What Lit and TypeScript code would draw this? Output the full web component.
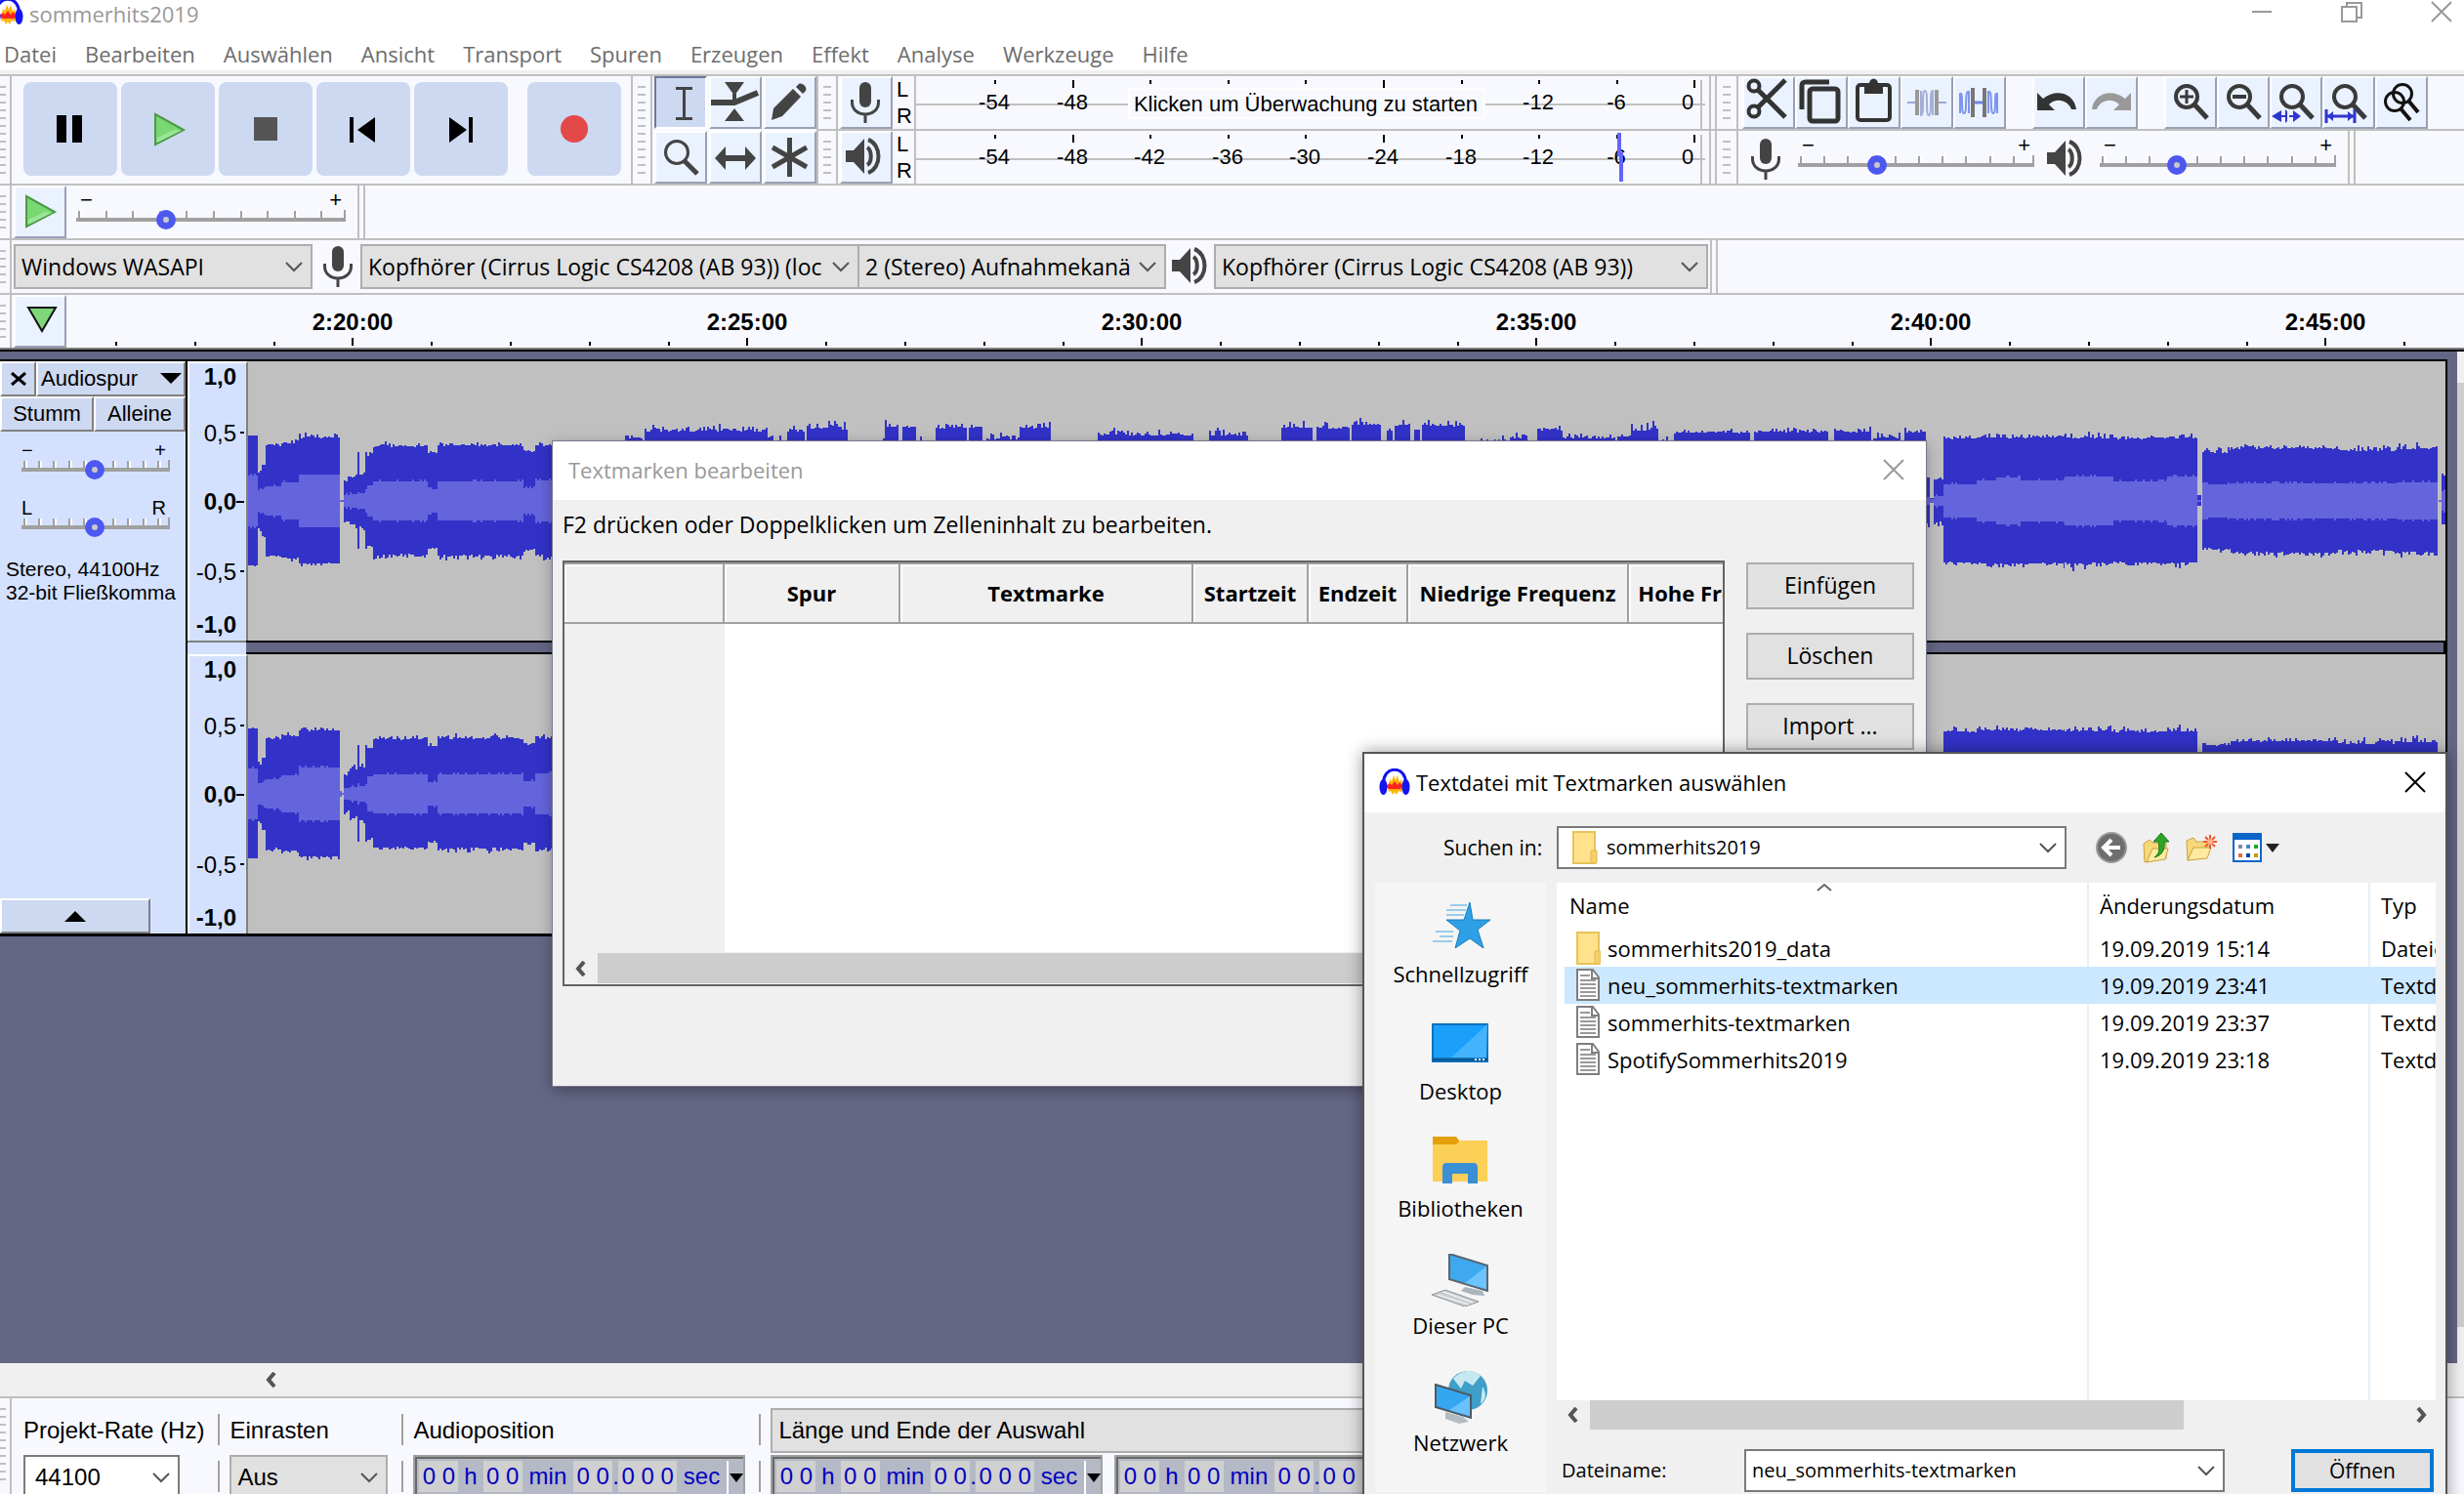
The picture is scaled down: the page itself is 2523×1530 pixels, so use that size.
import { LitElement, html, svg, css, nothing } from "lit";
import { customElement } from "lit/decorators.js";

/* ---------- icons ---------- */

const pic = (w: number, h: number, body: unknown) =>
  html`<svg class="pic" width=${w} height=${h} viewBox="0 0 ${w} ${h}" aria-hidden="true">${body}</svg>`;

const DARK = "#444444";

const mic = svg`<rect x="20" y="6" width="12" height="26" rx="6" fill=${DARK}/>
  <path d="M12.500 24v3c0 7 6 12 13.500 12s13.500-5 13.500-12v-3M26 39v9" fill="none" stroke=${DARK} stroke-width="3"/>`;
const speaker = svg`<path d="M6 20h8L25 8v36L14 32H6z" fill=${DARK}/>
  <path d="M28 17c5 3 5 15 0 18" fill="none" stroke=${DARK} stroke-width="4"/>
  <path d="M29 9c14 5 14 29 0 34" fill="none" stroke=${DARK} stroke-width="4"/>`;
const lens = (inner: unknown = nothing) => svg`<circle cx="23" cy="21" r="11" fill="none" stroke="#3a3a3a" stroke-width="4"/>
  <path d="M31 29L44 43" stroke="#3a3a3a" stroke-width="5"/>${inner}`;
const playGreen = svg`<path d="M1 1L30 17L1 32z" fill="#78d872" stroke="#4c9a49" stroke-width="2"/><path d="M3 30L28 17.500L20 17L3 25z" fill="#9be596"/>`;

const ICON = {
  pause: svg`<path d="M34 34h10v28H34zM50 34h10v28H50z" fill="#000"/>`,
  play: svg`<g transform="translate(34 32)">${playGreen}</g>`,
  stop: svg`<rect x="36" y="36" width="24" height="24" fill="#555"/>`,
  start: svg`<path d="M34 36h4v26h-4zM60 36v26L42 49z" fill="#000"/>`,
  end: svg`<path d="M56 36h4v26h-4zM36 36v26l18-13z" fill="#000"/>`,
  record: svg`<circle cx="48" cy="48" r="14" fill="#e34949"/>`,
  ibeam: svg`<path d="M22 12.500h17M22 43.500h17M30.500 12v32" stroke=${DARK} stroke-width="3"/>`,
  envelope: svg`<path d="M16 6h20L26 20zM16 46h20L26 33z" fill=${DARK}/><path d="M2 27h24L50 17" fill="none" stroke=${DARK} stroke-width="6"/><path d="M26 18v10" stroke=${DARK} stroke-width="4"/>`,
  pencil: svg`<path d="M8 45l2-12L30 13l8 8L19 41z" fill=${DARK}/><path d="M33 11l3-3c3-2 9 3 7 7l-3 3z" fill=${DARK}/>`,
  zoom: svg`<circle cx="23" cy="22" r="11.500" fill="none" stroke=${DARK} stroke-width="3"/><path d="M31 31L44 44" stroke=${DARK} stroke-width="5"/>`,
  shift: svg`<path d="M6 28l11-12v9h20v-9l11 12-11 12v-9H17v9z" fill=${DARK}/>`,
  multi: svg`<path d="M26.500 7v40M9 17l35 20M44 17L9 37" stroke=${DARK} stroke-width="5"/>`,
  mic,
  speaker,
  cut: svg`<g fill="none" stroke="#333" stroke-width="4"><circle cx="12" cy="10" r="5.500"/><circle cx="12" cy="36" r="5.500"/><path d="M16 14L44 42M16 32L44 4" stroke-width="5"/></g>`,
  copy: svg`<path d="M35 6H11c-3 0-4 1-4 4v24" fill="none" stroke="#333" stroke-width="5"/><rect x="15" y="13" width="29" height="33" rx="3" fill="none" stroke="#333" stroke-width="5"/>`,
  paste: svg`<rect x="10" y="9" width="33" height="36" rx="3" fill="none" stroke="#333" stroke-width="4"/><path d="M17 8h5c0-7 9-7 9 0h5v10H17z" fill="#333"/>`,
  trim: svg`<path d="M7 27h10M36 27h11" stroke="#9aa8d8" stroke-width="2"/><path d="M17 14v26M37 14v26" stroke="#999" stroke-width="4"/><path d="M21 15v25c4 0 0-25 4-25s0 25 4 25 0-25 4-25v25" fill="none" stroke="#a4b0da" stroke-width="2"/>`,
  silence: svg`<path d="M20 12v30M32 12v30" stroke="#777" stroke-width="4"/><path d="M22 27h8" stroke="#6f86e8" stroke-width="3"/><path d="M7 38V18c4-3 0 20 4 20s0-24 5-22v22M36 38V16c5-2 1 22 5 22s0-23 4-20v20" fill="none" stroke="#7e95ee" stroke-width="2"/>`,
  undo: svg`<path d="M5 17v18h18l-6-6c8-8 20-4 23 5h5C43 17 24 12 11 23z" fill="#333"/>`,
  redo: svg`<path d="M47 17v18H29l6-6c-8-8-20-4-23 5H7C9 17 28 12 41 23z" fill="#999"/>`,
  zoomIn: lens(svg`<path d="M16 21h14M23 14v14" stroke="#3a3a3a" stroke-width="3"/>`),
  zoomOut: lens(svg`<path d="M16 21h14" stroke="#3a3a3a" stroke-width="4"/>`),
  zoomSel: lens(svg`<path d="M2 41l10-6v5h4v-6l2 2v10l-2 2v-6h-4v5zM32 41l-8-6v5h-4v2h4v5z" fill="#2f35cc"/>`),
  zoomFit: lens(svg`<path d="M4 34v14M33 34v14M5 41h27" stroke="#2f35cc" stroke-width="3"/><path d="M5 41l6-5v10zM32 41l-6-5v10z" fill="#2f35cc"/>`),
  zoomToggle: svg`<g fill="none" stroke="#111"><circle cx="28" cy="18" r="9.500" stroke-width="3"/><circle cx="20" cy="26" r="9.500" stroke-width="3"/><path d="M34 25l10 12M26 33l10 12" stroke-width="4"/></g>`,
};

const logo = html`<svg class="pic" width="32" height="28" viewBox="0 0 32 28" aria-hidden="true">
  <path d="M9 20l2-9 2 2 2-6 2 5 2-5 2 7 2-3 2 9-2 4-3-1-2 4-2-3-2 3-2-4-2 1z" fill="#ffb400"/>
  <path d="M7 18l4-3 2 2 3-4 3 4 2-3 4 4-3 3H10z" fill="#f22"/>
  <path d="M5 17C2-4 30-4 27 17" fill="none" stroke="#1010ee" stroke-width="3"/>
  <ellipse cx="4.500" cy="19" rx="4" ry="8" fill="#1414f0"/><ellipse cx="27.500" cy="19" rx="4" ry="8" fill="#1414f0"/></svg>`;

const folder = svg`<path d="M1 1h22v32H1z" fill="#ffe28b" stroke="#e8c25a" stroke-width="2"/><path d="M19 20h6v13h-6z" fill="#f5d069" stroke="#e3b94d" stroke-width="1"/>`;
const sheet = svg`<path d="M1 1h16l6 8v23H1z" fill="#fff" stroke="#7f7f7f" stroke-width="2"/><path d="M16 1v9h7" fill="none" stroke="#7f7f7f" stroke-width="2"/><path d="M4 7h10M4 12h16M4 16h16M4 20h16M4 24h16M4 28h16" stroke="#999" stroke-width="2"/>`;

const chevron = html`<svg class="chev" width="20" height="12" viewBox="0 0 20 12" aria-hidden="true"><path d="M2 2l8 8 8-8" fill="none" stroke="#555" stroke-width="2"/></svg>`;
const cross = (c: string) => pic(22, 22, svg`<path d="M1 1l20 20M21 1L1 21" stroke=${c} stroke-width="2"/>`);
const arrowLeft = pic(12, 16, svg`<path d="M10 1L4 8l6 7" fill="none" stroke="#555" stroke-width="4"/>`);
const arrowRight = pic(12, 16, svg`<path d="M2 1l6 7-6 7" fill="none" stroke="#555" stroke-width="4"/>`);

/* ---------- waveform data: [start, end, peak, rms, jitter] ---------- */

type Seg = [number, number, number, number, number];
const WAVE: Seg[] = [
  [0, 10, 67, 26, 1], [10, 14, 30, 11, 3], [14, 18, 38, 12, 3], [18, 34, 58, 15, 4], [34, 52, 60, 19, 4],
  [52, 94, 66, 27, 4], [94, 98, 1, 1, 0], [98, 104, 20, 6, 5], [104, 112, 26, 7, 4], [112, 114, 50, 9, 1],
  [114, 120, 28, 8, 3], [120, 122, 50, 10, 1], [122, 128, 48, 16, 4], [128, 184, 57, 20, 4], [184, 194, 50, 12, 3],
  [194, 282, 58, 20, 4], [282, 294, 51, 13, 2], [294, 386, 58, 21, 4], [386, 404, 65, 20, 3], [406, 532, 73, 22, 5],
  [532, 546, 62, 20, 8], [552, 570, 72, 20, 5], [572, 614, 76, 22, 7], [614, 642, 50, 20, 4], [642, 652, 62, 20, 4],
  [652, 666, 77, 20, 6], [670, 684, 76, 20, 2], [686, 702, 58, 20, 8], [704, 736, 76, 22, 4], [738, 752, 76, 20, 3],
  [756, 790, 66, 20, 9], [790, 822, 77, 22, 7], [822, 868, 52, 20, 5], [870, 968, 69, 22, 6], [984, 1024, 69, 22, 6],
  [1058, 1090, 77, 22, 6], [1094, 1128, 76, 22, 6], [1130, 1160, 80, 22, 6], [1166, 1172, 72, 20, 3],
  [1174, 1190, 79, 20, 5], [1194, 1200, 74, 20, 3], [1202, 1246, 79, 22, 7], [1246, 1290, 60, 20, 7],
  [1292, 1310, 66, 20, 5], [1320, 1346, 74, 20, 6], [1346, 1400, 66, 20, 5], [1402, 1416, 67, 20, 4],
  [1416, 1444, 75, 20, 7], [1446, 1454, 62, 20, 5], [1460, 1538, 71, 22, 4], [1542, 1618, 72, 22, 4],
  [1624, 1662, 72, 22, 4], [1664, 1692, 67, 20, 8], [1696, 1718, 72, 20, 5], [1718, 1722, 26, 4, 6],
  [1722, 1726, 3, 2, 0], [1726, 1736, 24, 5, 6], [1736, 1770, 65, 17, 4], [1770, 1790, 66, 21, 4],
  [1790, 1815, 66, 24, 4], [1815, 1860, 66, 21, 4], [1860, 1910, 66, 25, 6], [1910, 1965, 65, 20, 4],
  [1965, 1996, 66, 25, 6], [1996, 2000, 6, 1, 2], [2001, 2030, 51, 17, 4], [2030, 2140, 55, 18, 4],
  [2140, 2200, 53, 18, 5], [2200, 2242, 55, 19, 5], [2243, 2246, 1, 1, 0], [2246, 2250, 26, 10, 4],
];

function wave(seed: number) {
  const mid = 143;
  let state = seed;
  const rnd = () => {
    state = (state * 1103515245 + 12345) % 2147483648;
    return state / 2147483648;
  };
  const spread = (j: number) => Math.round((rnd() * rnd() - 0.25) * j * 1.6);
  let peak = "";
  let rms = "";
  for (const [a, b, p, r, j] of WAVE) {
    for (let x = a; x < b; x += 2) {
      const up = Math.max(1, p + spread(j));
      const down = Math.max(1, p - 1 + spread(j));
      const soft = Math.max(1, r + (rnd() > 0.8 ? 2 : 0));
      const w = Math.min(2, b - x);
      peak += `M${x} ${mid - up}h${w}v${up + down}h-${w}z`;
      rms += `M${x} ${mid - soft}h${w}v${soft * 2}h-${w}z`;
    }
  }
  return html`<svg class="wave" viewBox="0 0 2250 286" preserveAspectRatio="none" shape-rendering="crispEdges" role="img" aria-label="Wellenform">
    <path d=${peak} fill="#3232c8"/><path d=${rms} fill="#6464dc"/></svg>`;
}

const WAVES = [wave(7), wave(41)];

/* ---------- shared pieces ---------- */

const combo = (id: string, label: string, value: string, cls = "") => html`
  <span class="combo ${cls}"><select id=${id} aria-label=${label}><option>${value}</option></select>${chevron}</span>`;

const slider = (label: string, value: number, cls = "", lo = "−", hi = "+") => html`
  <label class="slider ${cls}"><span class="ends"><span>${lo}</span><span>${hi}</span></span>
    <input type="range" min="0" max="100" .value=${String(value)} aria-label=${label} /></label>`;

const toolBtn = (name: keyof typeof ICON, label: string, cls = "") =>
  html`<button class="tool ${cls}" aria-label=${label}>${pic(54, 54, ICON[name])}</button>`;

const MENU = ["Datei", "Bearbeiten", "Auswählen", "Ansicht", "Transport", "Spuren", "Erzeugen", "Effekt", "Analyse", "Werkzeuge", "Hilfe"];

const scale = (monitor: boolean) => html`
  <svg class="scale" height="54" shape-rendering="crispEdges">
    <path d="M0 29H808" stroke="#c0c0c0" stroke-width="2"/>
    <path d="M804 4V54" stroke="#c0c0c0" stroke-width="2"/>
    ${[-54, -48, -42, -36, -30, -24, -18, -12, -6, 0].map((db, i) => {
      const x = Math.round(81 + i * 79.6);
      const covered = monitor && db > -48 && db < -12;
      return svg`<rect x=${x - 1} y="4" width="2" height=${db === -48 || db === -24 || db === 0 ? 8 : 4} fill="#000"/>
        ${covered ? nothing : svg`<text x=${db === 0 ? x - 7 : x - 1} y="34" text-anchor="middle">${db}</text>`}`;
    })}
    ${monitor
      ? svg`<rect x="218" y="13" width="364" height="30" fill="#f8f9ff" stroke="#fff" stroke-width="2"/>
        <text x="399" y="36" text-anchor="middle">Klicken um Überwachung zu starten</text>`
      : svg`<path d="M720 2v22h2v28" fill="none" stroke="#6464fa" stroke-width="4"/>`}
  </svg>`;

const timeField = (label: string) => {
  const d = (n: number) => html`<span class="digits">${Array.from({ length: n }, () => html`<i>0</i>`)}</span>`;
  return html`<div class="time" role="group" aria-label=${label}>
    ${d(2)}<span class="unit h">h</span>${d(2)}<span class="unit m">min</span>${d(2)}<span class="dot">.</span>${d(3)}<span class="unit s">sec</span>
    <button class="drop" aria-label="Format">${pic(16, 10, svg`<path d="M1 0h14L8 9z"/>`)}</button></div>`;
};

const PLACES: [string, unknown][] = [
  ["Schnellzugriff", svg`<path d="M39 0l3 18h18L47 28l6 19-14-10-15 10 5-18-14-11h18z" fill="#2f9fe6" stroke="#1a7cc0" stroke-width="1"/><path d="M19 3h17M15 8h20M15 13h18M4 30h18M8 35h14M1 40h20" stroke="#9accec" stroke-width="2"/>`],
  ["Desktop", svg`<rect x="1" y="5" width="56" height="38" fill="#1aa0fb" stroke="#0a72bd" stroke-width="2"/><path d="M57 5L20 39h36z" fill="#45b4ff"/><path d="M1 41h56" stroke="#075a96" stroke-width="3"/><path d="M44 41h12" stroke="#fff" stroke-width="2" stroke-dasharray="2 2"/>`],
  ["Bibliotheken", svg`<path d="M1 0h24l3 4v6H1z" fill="#e3a008"/><path d="M1 8h24l4-4h28v42H1z" fill="#fccf57"/><path d="M11 48V32c0-3 1-5 4-5h28c3 0 4 2 4 5v16H37V38H21v10z" fill="#3a8fd6"/>`],
  ["Dieser PC", svg`<path d="M18 0l39 12v26L18 26z" fill="#3fa9ef" stroke="#5b6670" stroke-width="2"/><path d="M56 13v23L34 30z" fill="#6cc4ff"/><path d="M34 34l18 4 2 5-12-1-12-4z" fill="#aab4bb"/><path d="M0 42l14-5 34 12-14 5z" fill="#c9ced2" stroke="#8f979d" stroke-width="1"/><path d="M6 42l32 10M12 39l30 11" stroke="#fff" stroke-width="1"/>`],
  ["Netzwerk", svg`<ellipse cx="37" cy="20" rx="20" ry="20" fill="#3f9fc8"/><path d="M22 8c8-10 22-10 28-3l-8 10-8-5-4 8zM52 16c5 8 3 14-2 18z" fill="#c6e8f0"/><path d="M4 14l36 11v23L4 37z" fill="#35a6f2" stroke="#4e5a64" stroke-width="2"/><path d="M39 26v20L18 40z" fill="#68c2ff"/><path d="M14 42l18 5 6 5-10 2-14-5z" fill="#b4bcc2"/>`],
];

const FILES: [string, string, string, boolean][] = [
  ["sommerhits2019_data", "19.09.2019 15:14", "Dateiordner", true],
  ["neu_sommerhits-textmarken", "19.09.2019 23:41", "Textdokument", false],
  ["sommerhits-textmarken", "19.09.2019 23:37", "Textdokument", false],
  ["SpotifySommerhits2019", "19.09.2019 23:18", "Textdokument", false],
];

@customElement("app-root")
export class AppRoot extends LitElement {
  static styles = css`
    :host {
      display: block;
      --ui: "Open Sans", "Noto Sans", sans-serif;
      --arial: "Liberation Sans", Arial, sans-serif;
      --bar: #f8f9ff;
      --line: #c0c0c0;
      --slate: #646684;
      font-family: var(--ui);
      font-size: 22px;
      line-height: 30px;
      color: #000;
    }
    *, *::before, *::after { box-sizing: border-box; }
    button, select, input { font: inherit; color: inherit; margin: 0; padding: 0; border: 0; background: none; border-radius: 0; }
    .pic { display: block; flex: none; }
    .app { position: relative; display: flex; flex-direction: column; height: 100vh; overflow: hidden; background: #fff; }

    .titlebar { display: flex; justify-content: space-between; align-items: flex-start; height: 38px; color: #999; }
    .brand { display: flex; align-items: flex-start; gap: 6px; overflow: hidden; }
    .brand .pic { margin-left: -8px; margin-top: -2px; }
    .brand h1 { font: inherit; line-height: 28px; margin: 0; }
    .wincontrols { display: flex; gap: 70px; padding: 1px 12px 0 0; }
    .menu { display: flex; gap: 29px; height: 34px; padding: 2px 4px 0; color: #6d6d6d; }
    .menu a { color: inherit; text-decoration: none; }

    .dock { border-top: 4px solid #f0f0f0; background: var(--bar); }
    .row { display: flex; border-top: 2px solid var(--line); }
    .grab { flex: none; width: 20px; padding: 10px 5px; border-right: 2px solid var(--line); background: repeating-linear-gradient(to bottom, var(--line) 0 2px, transparent 2px 8px) content-box; }
    .grab.edge { width: 12px; padding: 10px 4px 10px 0; }
    .transport { display: flex; gap: 4px; padding: 6px 10px 8px 12px; border-right: 2px solid var(--line); }
    .transport button { width: 96px; height: 96px; border-radius: 8px; background: #cdd9f1; }
    .transport .rec { margin-left: 16px; }
    .tool { width: 54px; height: 54px; overflow: hidden; background: #ebf2ff; border: 2px solid #fff; border-color: #fff #9aa0b5 #9aa0b5 #fff; }
    .tool .pic { margin: -2px; }
    .tool.down { background: #cdd9f1; border-color: #6e7896 #fff #fff #6e7896; }
    .tools { display: grid; grid-template-columns: repeat(3, 54px); gap: 2px; padding-left: 2px; border-right: 2px solid var(--line); }
    .stack { display: flex; flex-direction: column; }
    .stack > * + * { border-top: 2px solid var(--line); }
    .stack.rest { flex: 1; }
    .half { display: flex; height: 54px; box-sizing: content-box; }
    .half > * { flex: none; }
    .half > .tool { margin-left: 2px; }
    .lr { display: flex; flex-direction: column; width: 22px; padding: 0 0 0 4px; font: 22px/27px var(--arial); }
    .scale { width: 812px; margin-right: 2px; border-left: 2px solid var(--line); font: 22px var(--arial); }
    .end { width: 8px; border: 2px solid var(--line); border-width: 0 2px; }
    .rest .grab { width: 22px; padding: 10px 6px; }
    .rest .grab + .tool { margin-left: 4px; }
    .edit .tool + .tool { margin-left: 0; }
    .edit .tool.gap { margin-left: 27px; }
    .slim { height: 56px; }
    .slim > .tool { margin-left: 2px; }

    .slider { display: flex; flex-direction: column; width: 242px; padding-top: 2px; }
    .slider .ends { display: flex; justify-content: space-between; padding: 0 4px; font: 22px/26px var(--arial); }
    .slider input {
      appearance: none; width: 100%; height: 20px; margin-top: -3px;
      background:
        linear-gradient(#a0a0a0, #a0a0a0) 0 8px / 100% 4px no-repeat,
        linear-gradient(#a0a0a0, #a0a0a0) 100% 0 / 2px 8px no-repeat,
        repeating-linear-gradient(to right, #a0a0a0 0 2px, #fff 2px 4px, transparent 4px 10%) 2px 1px / 100% 7px no-repeat;
    }
    .slider input::-webkit-slider-thumb { appearance: none; width: 20px; height: 20px; border: 7px solid #4c58f0; border-radius: 50%; background: #c8c8c8; }
    .slider.speed { width: 276px; margin: 0 12px 0 10px; }

    .combo { display: inline-grid; align-items: center; min-width: 0; background: #e1e1e1; border: 2px solid #adadad; }
    .combo > * { grid-area: 1 / 1; }
    .combo select { appearance: none; width: 100%; height: 100%; padding: 0 30px 0 6px; line-height: 30px; text-overflow: clip; outline: 0; }
    .combo .chev { justify-self: end; margin-right: 7px; pointer-events: none; }
    .devices { height: 56px; font-size: 23px; }
    .devices .combo { height: 46px; margin-top: 4px; }
    .devices .host { width: 306px; margin-left: 2px; }
    .devices .input { width: 511px; }
    .devices .chans { width: 316px; margin-left: -2px; }
    .devices .output { width: 506px; margin-right: 2px; }
    .devices > .pic { margin: 0 -5px 0 0; }

    .ruler { height: 54px; box-sizing: content-box; border-bottom: 2px solid #808080; }
    .ruler > .tool { margin-left: 2px; }
    .ruler .times { flex: 1; height: 54px; font: bold 24px var(--arial); }

    .work { flex: 1; min-height: 0; display: flex; background: var(--slate); border-top: 2px solid #000; }
    .vscroll { width: 7px; margin-left: 10px; padding-top: 32px; background: #f0f0f0; }
    .vscroll div { height: 967px; background: #cdcdcd; }
    .track { flex: 1; align-self: flex-start; margin-top: 8px; display: grid; grid-template-columns: 192px 1fr; border: 2px solid #000; border-width: 2px 2px 3px 0; }
    .panel { display: flex; flex-direction: column; background: #d4e1fe; border-right: 2px solid #000; font: 22px/24px var(--arial); }
    .pair { display: grid; height: 36px; }
    .pair.head { grid-template-columns: 37px 1fr; }
    .pair.mute { grid-template-columns: 96px 1fr; }
    .face { display: flex; align-items: center; justify-content: center; background: #cdd9f1; border: 2px solid #fff; border-color: #fff #808080 #808080 #fff; }
    .face.name { justify-content: space-between; padding: 0 2px 0 3px; }
    .panel .slider { width: 152px; margin-left: 22px; padding-top: 7px; }
    .panel .slider .ends { padding: 0 4px 0 0; font-size: 20px; line-height: 25px; }
    .panel .slider + .slider { padding-top: 17px; }
    .format { margin: 21px 0 0 6px; font-size: 21px; white-space: nowrap; }
    .panel .fold { width: 154px; height: 36px; margin-top: auto; }
    .channels { display: flex; flex-direction: column; min-width: 0; }
    .channel { display: flex; height: 286px; box-sizing: content-box; background: #c0c0c0; }
    .vscale { flex: none; width: 62px; background: #d4e1fe; border: 2px solid #fff; border-width: 2px 2px 0 2px; border-right-color: #808080; font: 24px var(--arial); }
    .wave { flex: 1; min-width: 0; height: 286px; display: block; }
    .between { display: grid; grid-template-columns: 60px 1fr; height: 14px; }
    .between .l { background: #d4e1fe; border-top: 2px solid #808080; }
    .between .r { border: 2px solid #000; border-width: 2px 2px 2px 0; background: var(--slate); }

    .hscroll { flex: none; display: flex; align-items: center; height: 34px; padding-left: 271px; background: #f0f0f0; }
    .status { flex: none; display: flex; height: 100px; overflow: hidden; border-top: 2px solid var(--line); background: var(--bar); font: 24px/30px var(--arial); }
    .status .cell { display: flex; flex-direction: column; padding: 10px 14px 0 12px; }
    .status .cell + .cell { background: linear-gradient(#a0a0a0, #a0a0a0) 0 16px / 2px 32px no-repeat, linear-gradient(#a0a0a0, #a0a0a0) 0 64px / 2px 32px no-repeat; }
    .status .cap { flex: none; height: 48px; line-height: 46px; white-space: nowrap; }
    .status .combo { height: 46px; flex: none; }
    .status .combo select { font-size: 24px; padding-left: 6px; }
    .rate { width: 160px; background: #fff; border-color: #7a7a7a; }
    .status .rate select { padding-left: 10px; }
    .snap { width: 162px; }
    .what { width: 700px; margin-bottom: 2px; }
    .fields { display: flex; gap: 12px; }
    .time { display: flex; align-items: flex-start; width: 340px; height: 46px; flex: none; padding: 4px 0 0 4px; border: 2px solid #a0a0a0; border-bottom-color: #fff; box-shadow: inset 2px 2px #696969; background: #b4b9c5; color: #0000c0; line-height: 32px; }
    .digits { display: flex; background: #d0d0d0; }
    .digits i { width: 20px; text-align: center; font-style: normal; }
    .unit { text-align: center; }
    .unit.h { width: 26px; }
    .unit.m { width: 54px; }
    .dot { width: 6px; text-align: center; }
    .unit.s { width: 52px; }
    .drop { display: flex; align-items: center; justify-content: center; width: 18px; height: 36px; border-left: 2px solid #fff; color: #000; overflow: hidden; }

    .dialog { position: absolute; background: #f0f0f0; }
    .dialog header { display: flex; align-items: center; justify-content: space-between; height: 60px; background: #fff; }
    .dialog h2 { display: flex; align-items: center; gap: 6px; margin: 0; font: inherit; }
    .push { background: #e1e1e1; border: 2px solid #adadad; text-align: center; }

    .labels { left: 566px; top: 452px; width: 1406px; height: 660px; box-shadow: 0 0 0 1px #77778c, 0 4px 14px rgba(0, 0, 0, 0.35); }
    .labels header { padding: 0 22px 2px 16px; color: #999; }
    .labels p { margin: 0; padding: 10px 10px 22px; font-size: 23px; }
    .lbody { display: flex; gap: 22px; padding: 0 12px 0 10px; }
    .gridbox { flex: 1; min-width: 0; overflow: hidden; border: 2px solid #646464; background: #fff; }
    .gridbox table { width: 1276px; table-layout: fixed; border-collapse: separate; border-spacing: 0; }
    .gridbox th { height: 63px; padding: 0 0 2px; background: #f0f0f0; border: 2px solid #a0a0a0; border-width: 2px 2px 2px 0; box-shadow: inset 2px 2px #fff; font-weight: 700; font-size: 22px; white-space: nowrap; }
    .gridbox td { height: 336px; padding: 0; }
    .gridbox td.rowhead { background: #f0f0f0; }
    .sb { display: flex; align-items: center; height: 33px; padding-left: 10px; gap: 12px; background: #f0f0f0; }
    .sb .thumb { height: 31px; background: #cdcdcd; }
    .gridbox .thumb { flex: 1; }
    .side { display: flex; flex-direction: column; gap: 24px; width: 172px; padding-top: 2px; font-size: 23px; }
    .side .push { height: 48px; padding-bottom: 2px; }

    .open { left: 1395px; top: 770px; width: 1111px; height: 800px; border: 2px solid #555; box-shadow: 0 0 16px rgba(0, 0, 0, 0.4); }
    .open header { padding: 0 20px 2px 15px; }
    .look { display: flex; align-items: center; height: 72px; padding-left: 81px; gap: 14px; font-size: 21px; }
    .look label { width: 102px; white-space: nowrap; }
    .field { background: #fff; border-color: #7a7a7a; font-size: 20px; }
    .look .field { width: 522px; height: 44px; }
    .look .field select { padding-left: 49px; }
    .look .field .pic { margin-left: 14px; pointer-events: none; }
    .acts { display: flex; align-items: center; gap: 16px; margin-left: 16px; }
    .main { display: flex; }
    .places { display: flex; flex-direction: column; width: 175px; margin: 0 11px; padding-top: 20px; background: #f5f5f5; }
    .places button { display: flex; flex-direction: column; align-items: center; gap: 4px; height: 120px; }
    .files { flex: none; width: 900px; }
    .list { height: 530px; overflow: hidden; background: linear-gradient(#e6f0fa, #e6f0fa) 543px 0 / 2px 100% no-repeat, linear-gradient(#e6f0fa, #e6f0fa) 831px 0 / 2px 100% no-repeat, #fff; }
    .list table { width: 100%; table-layout: fixed; border-collapse: separate; border-spacing: 0; }
    .list th { height: 48px; padding: 8px 0 0 13px; text-align: left; vertical-align: top; font-weight: 400; }
    .list .sort { display: block; height: 0; }
    .list .sort svg { display: block; transform: translateY(-8px); margin: 0 auto 0 252px; }
    .list td { height: 38px; padding: 0 0 0 13px; overflow: hidden; white-space: nowrap; }
    .list td:first-child { padding-left: 8px; }
    .nm { display: flex; align-items: center; gap: 7px; height: 38px; padding-left: 12px; }
    .sel td { background: #cce8ff; }
    .sel td:first-child { background: linear-gradient(#cce8ff, #cce8ff) 8px 0 no-repeat; }
    .files .sb { height: 30px; padding: 0 8px 0 10px; }
    .files .thumb { width: 608px; margin-right: auto; height: 30px; }
    .namerow { display: flex; align-items: center; padding: 20px 2px 0 5px; font-size: 20px; }
    .namerow label { width: 187px; }
    .namerow .field { width: 492px; height: 44px; }
    .namerow .push { width: 146px; height: 44px; margin-left: auto; border: 4px solid #0078d7; font-size: 21px; }
  `;

  private renderToolbars() {
    return html`<div class="dock">
      <div class="row">
        <div class="grab edge"></div>
        <div class="transport">
          ${(["pause", "play", "stop", "start", "end", "record"] as const).map(
            (n) => html`<button class=${n === "record" ? "rec" : ""} aria-label=${n}>${pic(96, 96, ICON[n])}</button>`
          )}
        </div>
        <div class="grab"></div>
        <div class="tools">
          ${toolBtn("ibeam", "Auswahl", "down")}${toolBtn("envelope", "Hüllkurve")}${toolBtn("pencil", "Zeichnen")}
          ${toolBtn("zoom", "Zoom")}${toolBtn("shift", "Verschieben")}${toolBtn("multi", "Multi")}
        </div>
        <div class="stack">
          <div class="half"><div class="grab"></div>${toolBtn("mic", "Aufnahmepegel")}<div class="lr"><span>L</span><span>R</span></div>${scale(true)}<div class="end"></div></div>
          <div class="half"><div class="grab"></div>${toolBtn("speaker", "Wiedergabepegel")}<div class="lr"><span>L</span><span>R</span></div>${scale(false)}<div class="end"></div></div>
        </div>
        <div class="stack rest">
          <div class="half edit"><div class="grab"></div>
            ${toolBtn("cut", "Ausschneiden")}${toolBtn("copy", "Kopieren")}${toolBtn("paste", "Einfügen")}${toolBtn("trim", "Trimmen")}${toolBtn("silence", "Stille")}
            ${toolBtn("undo", "Rückgängig", "gap")}${toolBtn("redo", "Wiederholen")}
            ${toolBtn("zoomIn", "Vergrößern", "gap")}${toolBtn("zoomOut", "Verkleinern")}${toolBtn("zoomSel", "Auswahl zeigen")}${toolBtn("zoomFit", "Alles zeigen")}${toolBtn("zoomToggle", "Zoom umschalten")}
          </div>
          <div class="half"><div class="grab"></div>${pic(61, 54, svg`<g transform="translate(2 2)">${mic}</g>`)}
            ${slider("Aufnahmelautstärke", 32)}${pic(67, 54, svg`<g transform="translate(7 2)">${speaker}</g>`)}${slider("Wiedergabelautstärke", 31)}
            ${pic(12, 54, nothing)}<div class="end"></div></div>
        </div>
      </div>
      <div class="row slim"><div class="grab edge"></div>
        <button class="tool" aria-label="Abspielen mit Tempo">${pic(54, 54, svg`<g transform="translate(12 10)">${playGreen}</g>`)}</button>
        ${slider("Tempo", 32, "speed")}<div class="end"></div>
      </div>
      <div class="row devices"><div class="grab edge"></div>
        ${combo("host", "Audio-Host", "Windows WASAPI", "host")}${pic(54, 54, mic)}
        ${combo("in", "Aufnahmegerät", "Kopfhörer (Cirrus Logic CS4208 (AB 93)) (loc", "input")}
        ${combo("ch", "Kanäle", "2 (Stereo) Aufnahmekanä", "chans")}${pic(54, 54, speaker)}
        ${combo("out", "Wiedergabegerät", "Kopfhörer (Cirrus Logic CS4208 (AB 93))", "output")}
        <div class="end"></div>
      </div>
      <div class="row ruler"><div class="grab edge"></div>
        <button class="tool" aria-label="Abspielkopf anheften">${pic(54, 54, svg`<path d="M15 13h28L29 37z" fill="#7ed87a" stroke="#111" stroke-width="2"/>`)}</button>
        <svg class="times" shape-rendering="crispEdges">
          ${Array.from({ length: 30 }, (_, i) => {
            const x = Math.round(50 + i * 80.8);
            return svg`<rect x=${x} y=${i % 5 === 3 ? 44 : 48} width="2" height=${i % 5 === 3 ? 8 : 4}/>`;
          })}
          ${["2:20:00", "2:25:00", "2:30:00", "2:35:00", "2:40:00", "2:45:00"].map(
            (t, i) => svg`<text x=${293 + i * 404} y="36" text-anchor="middle">${t}</text>`
          )}
        </svg>
      </div>
    </div>`;
  }

  private renderChannel(index: number) {
    const marks: [string, number, boolean][] = [["1,0", 22, true], ["0,5", 80, false], ["0,0", 150, true], ["-0,5", 222, false], ["-1,0", 276, true]];
    return html`<div class="channel">
      <svg class="vscale" height="286" shape-rendering="crispEdges">
        ${marks.map(([t, y, bold]) => svg`<text x="48" y=${y} text-anchor="end" font-weight=${bold ? 700 : 400}>${t}</text>`)}
        <path d="M52 71h4M48 142h8M52 213h4" stroke="#000" stroke-width="2"/>
      </svg>${WAVES[index]}</div>`;
  }

  private renderTrack() {
    return html`<section class="track">
      <div class="panel">
        <div class="pair head"><button class="face" aria-label="Schließen">${pic(16, 14, svg`<path d="M1 1l14 12M15 1L1 13" stroke="#000" stroke-width="3"/>`)}</button>
          <button class="face name">Audiospur ${pic(22, 12, svg`<path d="M0 0h22L11 11z"/>`)}</button></div>
        <div class="pair mute"><button class="face">Stumm</button><button class="face">Alleine</button></div>
        ${slider("Lautstärke", 49)}${slider("Balance", 49, "", "L", "R")}
        <div class="format">Stereo, 44100Hz<br />32-bit Fließkomma</div>
        <button class="face fold" aria-label="Einklappen">${pic(22, 12, svg`<path d="M0 12h22L11 1z"/>`)}</button>
      </div>
      <div class="channels">${this.renderChannel(0)}<div class="between"><div class="l"></div><div class="r"></div></div>${this.renderChannel(1)}</div>
    </section>`;
  }

  private renderLabelDialog() {
    return html`<section class="dialog labels" role="dialog" aria-label="Textmarken bearbeiten">
      <header><h2>Textmarken bearbeiten</h2><button aria-label="Schließen">${cross("#999")}</button></header>
      <p>F2 drücken oder Doppelklicken um Zelleninhalt zu bearbeiten.</p>
      <div class="lbody">
        <div class="gridbox">
          <table>
            <colgroup>${[164, 180, 300, 118, 102, 226, 186].map((w) => html`<col style="width:${w}px" />`)}</colgroup>
            <thead><tr>${["", "Spur", "Textmarke", "Startzeit", "Endzeit", "Niedrige Frequenz", "Hohe Frequenz"].map((t) => html`<th>${t}</th>`)}</tr></thead>
            <tbody><tr><td class="rowhead"></td><td colspan="6"></td></tr></tbody>
          </table>
          <div class="sb">${arrowLeft}<div class="thumb"></div></div>
        </div>
        <div class="side"><button class="push">Einfügen</button><button class="push">Löschen</button><button class="push">Import ...</button></div>
      </div>
    </section>`;
  }

  private renderOpenDialog() {
    return html`<section class="dialog open" role="dialog" aria-label="Textdatei mit Textmarken auswählen">
      <header><h2>${logo}Textdatei mit Textmarken auswählen</h2><button aria-label="Schließen">${cross("#000")}</button></header>
      <div class="look"><label for="dir">Suchen in:</label>
        <span class="combo field"><select id="dir"><option>sommerhits2019</option></select>${pic(26, 34, folder)}${chevron}</span>
        <div class="acts">
          <button aria-label="Zurück">${pic(32, 32, svg`<circle cx="16" cy="16" r="15" fill="#6e6e6e" stroke="#999" stroke-width="2"/><path d="M25 16H9M16 8l-8 8 8 8" fill="none" stroke="#fff" stroke-width="4"/>`)}</button>
          <button aria-label="Nach oben">${pic(28, 32, svg`<path d="M1 12l6-4 3 3h14v16L2 31z" fill="#f6d878" stroke="#c9a040"/><path d="M4 31l6-14h16l-3 11z" fill="#fdeaa0" stroke="#c9a040"/><path d="M12 26c6-4 5-10 4-16h-5l8-9 8 9h-5c1 8-2 14-10 16z" fill="#2fa52a" stroke="#187a15"/>`)}</button>
          <button aria-label="Neuer Ordner">${pic(32, 32, svg`<path d="M1 9l7-3 3 4h12v14L2 29z" fill="#f6d878" stroke="#c9a040"/><path d="M2 29l6-13h18l-4 11z" fill="#fdeaa0" stroke="#c9a040"/><path d="M25 3v14M18 10h14M20 5l10 10M30 5L20 15" stroke="#f0572c" stroke-width="2"/><circle cx="25" cy="10" r="3" fill="#ffb28a"/>`)}</button>
          <button aria-label="Ansicht">${pic(50, 32, svg`<path d="M1 2h28v28H1z" fill="#fff" stroke="#0c66c8" stroke-width="2"/><path d="M1 2h28v6H1z" fill="#0c66c8"/><path d="M6 13h4v4H6z" fill="#88a"/><path d="M14 13h4v4h-4z" fill="#48c"/><path d="M22 13h4v4h-4z" fill="#2a2"/><path d="M6 22h4v4H6z" fill="#e64"/><path d="M14 22h4v4h-4z" fill="#04a"/><path d="M22 22h4v4h-4z" fill="#c90"/><path d="M34 12h14l-7 9z" fill="#222"/>`)}</button>
        </div>
      </div>
      <div class="main">
        <nav class="places">${PLACES.map(([name, body]) => html`<button>${pic(60, 54, body)}${name}</button>`)}</nav>
        <div class="files">
          <div class="list"><table>
            <colgroup><col style="width:543px" /><col style="width:288px" /><col /></colgroup>
            <thead><tr><th><span class="sort"><svg width="18" height="10" viewBox="0 0 18 10"><path d="M2 8l7-6 7 6" fill="none" stroke="#666" stroke-width="2"/></svg></span>Name</th><th>Änderungsdatum</th><th>Typ</th></tr></thead>
            <tbody>${FILES.map(([n, d, t, dir]) => html`<tr class=${n.startsWith("neu") ? "sel" : ""}>
              <td><div class="nm">${pic(25, 34, dir ? folder : sheet)}${n}</div></td><td>${d}</td><td>${t}</td></tr>`)}</tbody>
          </table></div>
          <div class="sb">${arrowLeft}<div class="thumb"></div>${arrowRight}</div>
          <div class="namerow"><label for="fn">Dateiname:</label>
            <span class="combo field"><select id="fn"><option>neu_sommerhits-textmarken</option></select>${chevron}</span>
            <button class="push">Öffnen</button></div>
        </div>
      </div>
    </section>`;
  }

  render() {
    return html`<div class="app">
      <div class="titlebar"><div class="brand">${logo}<h1>sommerhits2019</h1></div>
        <div class="wincontrols">
          <button aria-label="Minimieren">${pic(22, 22, svg`<path d="M1 11h20" stroke="#999" stroke-width="2"/>`)}</button>
          <button aria-label="Wiederherstellen">${pic(22, 22, svg`<path d="M1 6h15v15H1zM6 6V2h15v15h-5" fill="none" stroke="#999" stroke-width="2"/>`)}</button>
          <button aria-label="Schließen">${cross("#999")}</button>
        </div></div>
      <nav class="menu">${MENU.map((m) => html`<a href="#">${m}</a>`)}</nav>
      ${this.renderToolbars()}
      <div class="work">${this.renderTrack()}<div class="vscroll"><div></div></div></div>
      <div class="hscroll">${arrowLeft}</div>
      <div class="status"><div class="grab edge"></div>
        <div class="cell"><label class="cap" for="rate">Projekt-Rate (Hz)</label>${combo("rate", "Projekt-Rate", "44100", "rate")}</div>
        <div class="cell"><label class="cap" for="snap">Einrasten</label>${combo("snap", "Einrasten", "Aus", "snap")}</div>
        <div class="cell"><span class="cap">Audioposition</span>${timeField("Audioposition")}</div>
        <div class="cell">${combo("what", "Auswahlanzeige", "Länge und Ende der Auswahl", "what")}
          <div class="fields">${timeField("Länge")}${timeField("Ende")}</div></div>
      </div>
      ${this.renderLabelDialog()}${this.renderOpenDialog()}
    </div>`;
  }
}
